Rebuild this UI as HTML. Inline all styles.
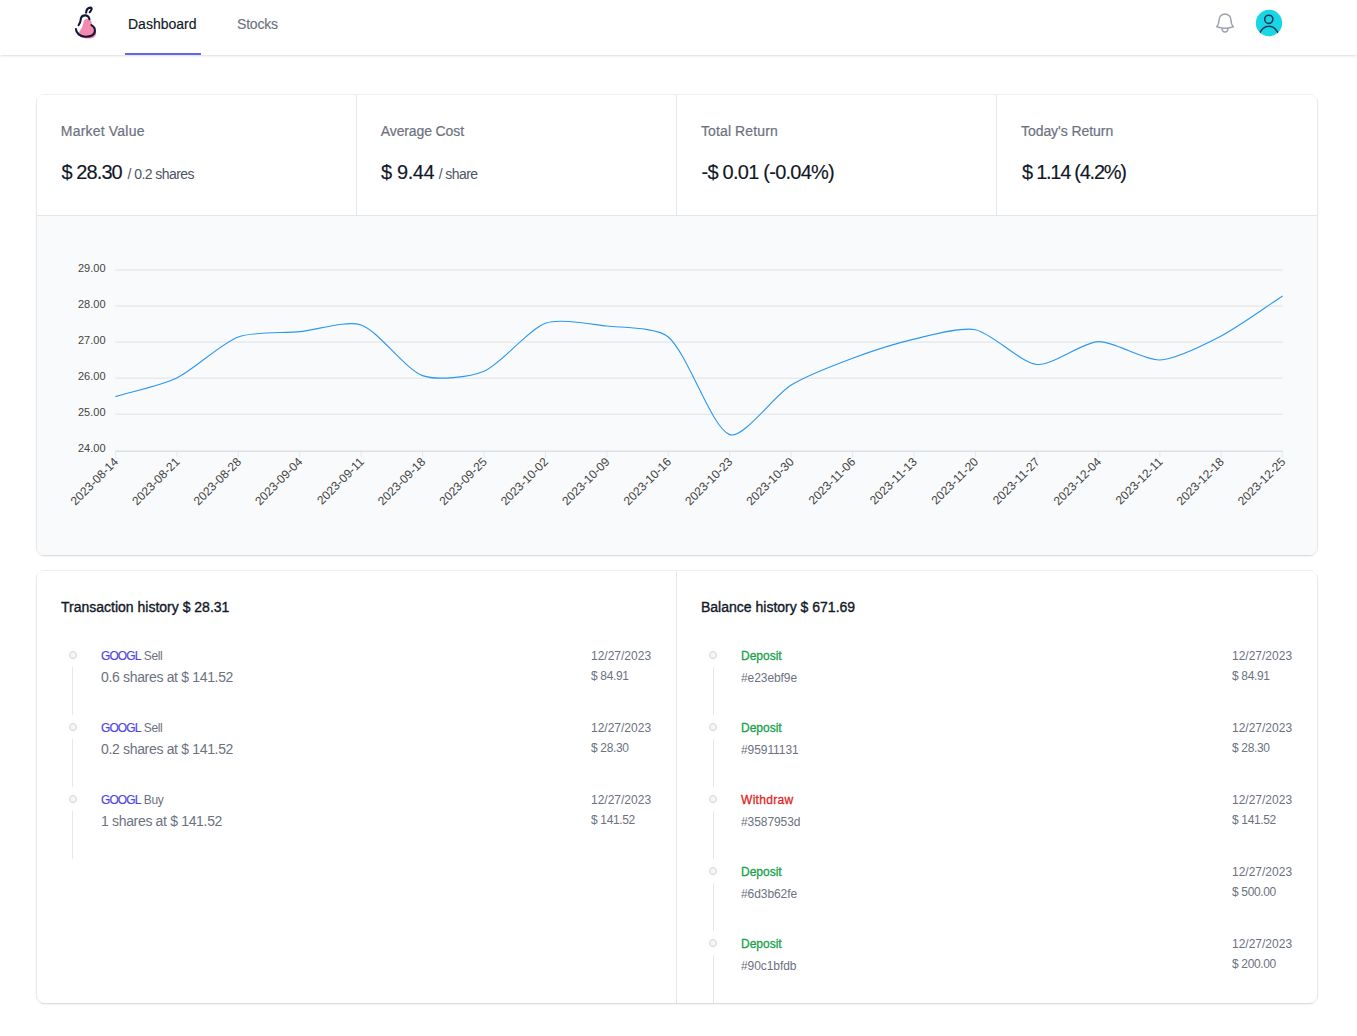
<!DOCTYPE html>
<html><head><meta charset="utf-8">
<style>
*{margin:0;padding:0;box-sizing:border-box}
html,body{width:1357px;height:1036px;overflow:hidden;background:#fff;font-family:"Liberation Sans",sans-serif}
.a{position:absolute;white-space:nowrap;line-height:1}
svg text{font-family:"Liberation Sans",sans-serif}
#hdr{position:absolute;left:0;top:0;width:1357px;height:55px;background:#fff;box-shadow:0 1px 3px 0 rgba(0,0,0,.1),0 1px 2px -1px rgba(0,0,0,.1)}
.card{position:absolute;left:37px;width:1280px;background:#fff;border-radius:8px;box-shadow:0 1px 3px 0 rgba(0,0,0,.1),0 1px 2px -1px rgba(0,0,0,.1);overflow:hidden}
.rl{position:absolute;background:rgba(0,0,0,.05)}
.lbl{font-size:14px;color:#6b7280;-webkit-text-stroke:.2px #6b7280}
.val{font-size:20px;color:#111827;-webkit-text-stroke:.15px #111827}
.sub{font-size:14px;color:#4b5563}
.ttl{font-size:14px;color:#111827;-webkit-text-stroke:.35px #111827}
.s12{font-size:12px;color:#6b7280}
.amt{letter-spacing:-.35px}
.hsh{letter-spacing:-.08px}
.kd{letter-spacing:-.4px}
.s14{font-size:14px;color:#6b7280;letter-spacing:-.33px}
.tk{color:#4f46e5;letter-spacing:-.9px;-webkit-text-stroke:.2px #4f46e5}
.dep{font-size:12px;color:#16a34a;-webkit-text-stroke:.3px #16a34a}
.wd{font-size:12px;color:#dc2626;-webkit-text-stroke:.3px #dc2626;letter-spacing:.3px}
</style></head><body>
<div id="hdr"></div>
<div class="rl" style="left:41px;top:94px;width:1272px;height:1px"></div><div class="rl" style="left:41px;top:555px;width:1272px;height:1px"></div><div class="rl" style="left:36px;top:99px;width:1px;height:452px"></div><div class="rl" style="left:1317px;top:99px;width:1px;height:452px"></div>
<div class="rl" style="left:41px;top:570px;width:1272px;height:1px"></div><div class="rl" style="left:41px;top:1003px;width:1272px;height:1px"></div><div class="rl" style="left:36px;top:575px;width:1px;height:424px"></div><div class="rl" style="left:1317px;top:575px;width:1px;height:424px"></div>

<svg class="a" style="left:60px;top:0" width="60" height="50" viewBox="60 0 60 50">
 <path d="M87 18.8 C90 18.8 92 21 91.8 24 C91.6 26 92 27 94 28.5 C96.5 30.5 96.8 34 95 36.5 C93 38.8 88 39 84 38 C80 37 78 34.5 79.5 31.5 C80.5 29.5 82.5 27.5 83 24.5 C83.5 21 84.5 18.8 87 18.8 Z" fill="#f38bb0"/>
 <g fill="none" stroke="#16163a" stroke-width="2.1" stroke-linecap="round">
  <path d="M78.6 25.1 C80.5 23 80.5 21 80.8 19 C81.3 16.5 83 15.4 85.1 15.4 C87.3 15.4 89 17 89.5 19.3"/>
  <path d="M91.4 25.1 C94 26.5 95.2 29 94.9 31.5 C94.5 35 90.5 36.7 85.5 36.7 C80 36.7 76 33 75.9 29"/>
  <path d="M86.1 12.8 C86.2 10 87.8 7.8 90.6 7.6 C92.2 7.6 92 10 89.7 12.2"/>
 </g>
</svg>
<div class="a" style="left:128px;top:17px;font-size:14px;color:#111827;-webkit-text-stroke:.15px #111827">Dashboard</div>
<div class="a" style="left:237px;top:17px;font-size:14px;color:#6b7280;letter-spacing:-.2px;-webkit-text-stroke:.15px #6b7280">Stocks</div>
<div class="a" style="left:125px;top:53px;width:76px;height:2px;background:#6366f1"></div>
<svg class="a" style="left:1213px;top:11px" width="24" height="24" viewBox="0 0 24 24" fill="none" stroke="#9ca3af" stroke-width="1.5" stroke-linecap="round" stroke-linejoin="round"><path d="M14.857 17.082a23.848 23.848 0 005.454-1.31A8.967 8.967 0 0118 9.75v-.7V9A6 6 0 006 9v.75a8.967 8.967 0 01-2.312 6.022c1.733.64 3.56 1.085 5.455 1.31m5.714 0a24.255 24.255 0 01-5.714 0m5.714 0a3 3 0 11-5.714 0"/></svg>
<svg class="a" style="left:1254px;top:8px" width="30" height="30" viewBox="0 0 30 30">
 <defs><clipPath id="cc"><circle cx="15" cy="15" r="13.2"/></clipPath></defs>
 <circle cx="15" cy="15" r="13.2" fill="#17d7e4"/>
 <g clip-path="url(#cc)" fill="none" stroke="#2a3557" stroke-width="1.5">
  <circle cx="14.8" cy="11.3" r="4.1"/>
  <path d="M5 26.5 C7 21.5 10.5 18.2 14.8 18.2 C19 18.2 22.6 21.5 24.6 26.5"/>
 </g>
</svg>

<div class="card" style="top:95px;height:460px">
  <div class="a" style="left:0;top:0;width:1280px;height:121px;border-bottom:1px solid #e5e7eb"></div>
  <div class="a" style="left:319px;top:0;width:1px;height:120px;background:#e5e7eb"></div>
  <div class="a" style="left:639px;top:0;width:1px;height:120px;background:#e5e7eb"></div>
  <div class="a" style="left:959px;top:0;width:1px;height:120px;background:#e5e7eb"></div>
  <div class="a" style="left:0;top:121px;width:1280px;height:339px;background:#f9fafb"></div>
</div>
<div class="a lbl" style="left:60.8px;top:124.1px;letter-spacing:.2px">Market Value</div>
<div class="a lbl" style="left:380.8px;top:124.1px;letter-spacing:-.12px">Average Cost</div>
<div class="a lbl" style="left:701px;top:124.1px;letter-spacing:.11px">Total Return</div>
<div class="a lbl" style="left:1021px;top:124.1px;letter-spacing:-.06px">Today's Return</div>
<div class="a val" style="left:61.5px;top:161.9px;letter-spacing:-.92px">$ 28.30</div>
<div class="a sub" style="left:127.5px;top:166.9px;letter-spacing:-.56px">/ 0.2 shares</div>
<div class="a val" style="left:381px;top:161.9px;letter-spacing:-.38px">$ 9.44</div>
<div class="a sub" style="left:438.7px;top:166.9px;letter-spacing:-.57px">/ share</div>
<div class="a val" style="left:701.5px;top:161.9px;letter-spacing:-.75px">-$ 0.01 (-0.04%)</div>
<div class="a val" style="left:1022px;top:161.9px;letter-spacing:-1.26px">$ 1.14 (4.2%)</div>
<svg class="a" style="left:0;top:0" width="1357" height="1036" viewBox="0 0 1357 1036">
<rect x="115.4" y="269.40" width="1167.3" height="1.2" fill="rgba(0,0,0,0.085)"/>
<rect x="115.4" y="305.45" width="1167.3" height="1.2" fill="rgba(0,0,0,0.085)"/>
<rect x="115.4" y="341.50" width="1167.3" height="1.2" fill="rgba(0,0,0,0.085)"/>
<rect x="115.4" y="377.55" width="1167.3" height="1.2" fill="rgba(0,0,0,0.085)"/>
<rect x="115.4" y="413.60" width="1167.3" height="1.2" fill="rgba(0,0,0,0.085)"/>
<rect x="115.4" y="450" width="1167.3" height="1" fill="rgba(0,0,0,0.05)"/>
<rect x="115.4" y="451" width="1167.3" height="1" fill="rgba(0,0,0,0.11)"/>
<rect x="114.90" y="452" width="1" height="5.3" fill="rgba(0,0,0,0.07)"/>
<rect x="176.33" y="452" width="1" height="5.3" fill="rgba(0,0,0,0.07)"/>
<rect x="237.77" y="452" width="1" height="5.3" fill="rgba(0,0,0,0.07)"/>
<rect x="299.20" y="452" width="1" height="5.3" fill="rgba(0,0,0,0.07)"/>
<rect x="360.64" y="452" width="1" height="5.3" fill="rgba(0,0,0,0.07)"/>
<rect x="422.07" y="452" width="1" height="5.3" fill="rgba(0,0,0,0.07)"/>
<rect x="483.51" y="452" width="1" height="5.3" fill="rgba(0,0,0,0.07)"/>
<rect x="544.94" y="452" width="1" height="5.3" fill="rgba(0,0,0,0.07)"/>
<rect x="606.37" y="452" width="1" height="5.3" fill="rgba(0,0,0,0.07)"/>
<rect x="667.81" y="452" width="1" height="5.3" fill="rgba(0,0,0,0.07)"/>
<rect x="729.24" y="452" width="1" height="5.3" fill="rgba(0,0,0,0.07)"/>
<rect x="790.68" y="452" width="1" height="5.3" fill="rgba(0,0,0,0.07)"/>
<rect x="852.11" y="452" width="1" height="5.3" fill="rgba(0,0,0,0.07)"/>
<rect x="913.54" y="452" width="1" height="5.3" fill="rgba(0,0,0,0.07)"/>
<rect x="974.98" y="452" width="1" height="5.3" fill="rgba(0,0,0,0.07)"/>
<rect x="1036.41" y="452" width="1" height="5.3" fill="rgba(0,0,0,0.07)"/>
<rect x="1097.85" y="452" width="1" height="5.3" fill="rgba(0,0,0,0.07)"/>
<rect x="1159.28" y="452" width="1" height="5.3" fill="rgba(0,0,0,0.07)"/>
<rect x="1220.72" y="452" width="1" height="5.3" fill="rgba(0,0,0,0.07)"/>
<rect x="1282.15" y="452" width="1" height="5.3" fill="rgba(0,0,0,0.07)"/>
<text x="105.5" y="272" text-anchor="end" font-size="11" fill="#444">29.00</text>
<text x="105.5" y="308" text-anchor="end" font-size="11" fill="#444">28.00</text>
<text x="105.5" y="344" text-anchor="end" font-size="11" fill="#444">27.00</text>
<text x="105.5" y="380" text-anchor="end" font-size="11" fill="#444">26.00</text>
<text x="105.5" y="416" text-anchor="end" font-size="11" fill="#444">25.00</text>
<text x="105.5" y="452" text-anchor="end" font-size="11" fill="#444">24.00</text>
<text transform="translate(119.00 462.5) rotate(-45)" text-anchor="end" font-size="12" fill="#444">2023-08-14</text>
<text transform="translate(180.43 462.5) rotate(-45)" text-anchor="end" font-size="12" fill="#444">2023-08-21</text>
<text transform="translate(241.87 462.5) rotate(-45)" text-anchor="end" font-size="12" fill="#444">2023-08-28</text>
<text transform="translate(303.30 462.5) rotate(-45)" text-anchor="end" font-size="12" fill="#444">2023-09-04</text>
<text transform="translate(364.74 462.5) rotate(-45)" text-anchor="end" font-size="12" fill="#444">2023-09-11</text>
<text transform="translate(426.17 462.5) rotate(-45)" text-anchor="end" font-size="12" fill="#444">2023-09-18</text>
<text transform="translate(487.61 462.5) rotate(-45)" text-anchor="end" font-size="12" fill="#444">2023-09-25</text>
<text transform="translate(549.04 462.5) rotate(-45)" text-anchor="end" font-size="12" fill="#444">2023-10-02</text>
<text transform="translate(610.47 462.5) rotate(-45)" text-anchor="end" font-size="12" fill="#444">2023-10-09</text>
<text transform="translate(671.91 462.5) rotate(-45)" text-anchor="end" font-size="12" fill="#444">2023-10-16</text>
<text transform="translate(733.34 462.5) rotate(-45)" text-anchor="end" font-size="12" fill="#444">2023-10-23</text>
<text transform="translate(794.78 462.5) rotate(-45)" text-anchor="end" font-size="12" fill="#444">2023-10-30</text>
<text transform="translate(856.21 462.5) rotate(-45)" text-anchor="end" font-size="12" fill="#444">2023-11-06</text>
<text transform="translate(917.64 462.5) rotate(-45)" text-anchor="end" font-size="12" fill="#444">2023-11-13</text>
<text transform="translate(979.08 462.5) rotate(-45)" text-anchor="end" font-size="12" fill="#444">2023-11-20</text>
<text transform="translate(1040.51 462.5) rotate(-45)" text-anchor="end" font-size="12" fill="#444">2023-11-27</text>
<text transform="translate(1101.95 462.5) rotate(-45)" text-anchor="end" font-size="12" fill="#444">2023-12-04</text>
<text transform="translate(1163.38 462.5) rotate(-45)" text-anchor="end" font-size="12" fill="#444">2023-12-11</text>
<text transform="translate(1224.82 462.5) rotate(-45)" text-anchor="end" font-size="12" fill="#444">2023-12-18</text>
<text transform="translate(1286.25 462.5) rotate(-45)" text-anchor="end" font-size="12" fill="#444">2023-12-25</text>
<path d="M115.40 396.61 C131.17 391.81 162.16 385.04 176.83 377.91 C193.71 369.71 221.07 343.39 238.27 336.92 C252.62 331.51 283.94 333.15 299.70 331.63 C315.49 330.10 347.35 320.07 361.14 325.01 C378.90 331.37 404.78 368.94 422.57 375.63 C436.33 380.80 470.07 377.13 484.01 371.20 C501.62 363.70 527.81 329.78 545.44 323.30 C559.36 318.19 591.21 324.32 606.87 326.06 C622.76 327.84 657.23 327.22 668.31 337.01 C688.78 355.10 711.01 427.30 729.74 434.63 C742.56 439.64 774.11 395.65 791.18 385.05 C805.66 376.04 836.51 364.25 852.61 358.24 C868.06 352.46 898.00 342.86 914.04 339.12 C929.55 335.52 960.71 326.63 975.48 329.67 C992.26 333.13 1020.55 362.84 1036.91 364.44 C1052.10 365.92 1082.40 342.23 1098.35 341.65 C1113.95 341.08 1144.23 360.68 1159.78 359.95 C1175.78 359.21 1206.27 343.69 1221.22 335.90 C1237.82 327.26 1266.88 306.22 1282.65 295.97" fill="none" stroke="#2b98f0" stroke-width="1.1"/>
</svg>

<div class="card" style="top:571px;height:432px">
  <div class="a" style="left:639px;top:0;width:1px;height:432px;background:#e5e7eb"></div>
</div>
<div class="a ttl" style="left:61px;top:600px">Transaction history $ 28.31</div>
<div class="a ttl" style="left:701px;top:600px">Balance history $ 671.69</div>
<svg class="a" style="left:68px;top:650px" width="10" height="10"><circle cx="5" cy="5" r="3.5" fill="#f3f4f6" stroke="#d1d5db" stroke-width="1"/></svg>
<div class="a" style="left:72px;top:667px;width:1px;height:48px;background:#e5e7eb"></div>
<div class="a s12" style="left:101px;top:649.8px"><span class="tk">GOOGL</span> <span class="kd">Sell</span></div>
<div class="a s14" style="left:101px;top:670.2px">0.6 shares at $ 141.52</div>
<div class="a s12" style="left:591px;top:649.8px">12/27/2023</div>
<div class="a s12 amt" style="left:591px;top:669.8px">$ 84.91</div>
<svg class="a" style="left:68px;top:722px" width="10" height="10"><circle cx="5" cy="5" r="3.5" fill="#f3f4f6" stroke="#d1d5db" stroke-width="1"/></svg>
<div class="a" style="left:72px;top:739px;width:1px;height:48px;background:#e5e7eb"></div>
<div class="a s12" style="left:101px;top:721.8px"><span class="tk">GOOGL</span> <span class="kd">Sell</span></div>
<div class="a s14" style="left:101px;top:742.2px">0.2 shares at $ 141.52</div>
<div class="a s12" style="left:591px;top:721.8px">12/27/2023</div>
<div class="a s12 amt" style="left:591px;top:741.8px">$ 28.30</div>
<svg class="a" style="left:68px;top:794px" width="10" height="10"><circle cx="5" cy="5" r="3.5" fill="#f3f4f6" stroke="#d1d5db" stroke-width="1"/></svg>
<div class="a" style="left:72px;top:811px;width:1px;height:48px;background:#e5e7eb"></div>
<div class="a s12" style="left:101px;top:793.8px"><span class="tk">GOOGL</span> <span class="kd">Buy</span></div>
<div class="a s14" style="left:101px;top:814.2px">1 shares at $ 141.52</div>
<div class="a s12" style="left:591px;top:793.8px">12/27/2023</div>
<div class="a s12 amt" style="left:591px;top:813.8px">$ 141.52</div>
<svg class="a" style="left:708px;top:650px" width="10" height="10"><circle cx="5" cy="5" r="3.5" fill="#f3f4f6" stroke="#d1d5db" stroke-width="1"/></svg>
<div class="a" style="left:713px;top:667px;width:1px;height:48px;background:#e5e7eb"></div>
<div class="a dep" style="left:741px;top:649.8px">Deposit</div>
<div class="a s12 hsh" style="left:741px;top:671.9px">#e23ebf9e</div>
<div class="a s12" style="left:1232px;top:649.8px">12/27/2023</div>
<div class="a s12 amt" style="left:1232px;top:669.8px">$ 84.91</div>
<svg class="a" style="left:708px;top:722px" width="10" height="10"><circle cx="5" cy="5" r="3.5" fill="#f3f4f6" stroke="#d1d5db" stroke-width="1"/></svg>
<div class="a" style="left:713px;top:739px;width:1px;height:48px;background:#e5e7eb"></div>
<div class="a dep" style="left:741px;top:721.8px">Deposit</div>
<div class="a s12 hsh" style="left:741px;top:743.9px">#95911131</div>
<div class="a s12" style="left:1232px;top:721.8px">12/27/2023</div>
<div class="a s12 amt" style="left:1232px;top:741.8px">$ 28.30</div>
<svg class="a" style="left:708px;top:794px" width="10" height="10"><circle cx="5" cy="5" r="3.5" fill="#f3f4f6" stroke="#d1d5db" stroke-width="1"/></svg>
<div class="a" style="left:713px;top:811px;width:1px;height:48px;background:#e5e7eb"></div>
<div class="a wd" style="left:741px;top:793.8px">Withdraw</div>
<div class="a s12 hsh" style="left:741px;top:815.9px">#3587953d</div>
<div class="a s12" style="left:1232px;top:793.8px">12/27/2023</div>
<div class="a s12 amt" style="left:1232px;top:813.8px">$ 141.52</div>
<svg class="a" style="left:708px;top:866px" width="10" height="10"><circle cx="5" cy="5" r="3.5" fill="#f3f4f6" stroke="#d1d5db" stroke-width="1"/></svg>
<div class="a" style="left:713px;top:883px;width:1px;height:48px;background:#e5e7eb"></div>
<div class="a dep" style="left:741px;top:865.8px">Deposit</div>
<div class="a s12 hsh" style="left:741px;top:887.9px">#6d3b62fe</div>
<div class="a s12" style="left:1232px;top:865.8px">12/27/2023</div>
<div class="a s12 amt" style="left:1232px;top:885.8px">$ 500.00</div>
<svg class="a" style="left:708px;top:938px" width="10" height="10"><circle cx="5" cy="5" r="3.5" fill="#f3f4f6" stroke="#d1d5db" stroke-width="1"/></svg>
<div class="a" style="left:713px;top:955px;width:1px;height:48px;background:#e5e7eb"></div>
<div class="a dep" style="left:741px;top:937.8px">Deposit</div>
<div class="a s12 hsh" style="left:741px;top:959.9px">#90c1bfdb</div>
<div class="a s12" style="left:1232px;top:937.8px">12/27/2023</div>
<div class="a s12 amt" style="left:1232px;top:957.8px">$ 200.00</div>
</body></html>
